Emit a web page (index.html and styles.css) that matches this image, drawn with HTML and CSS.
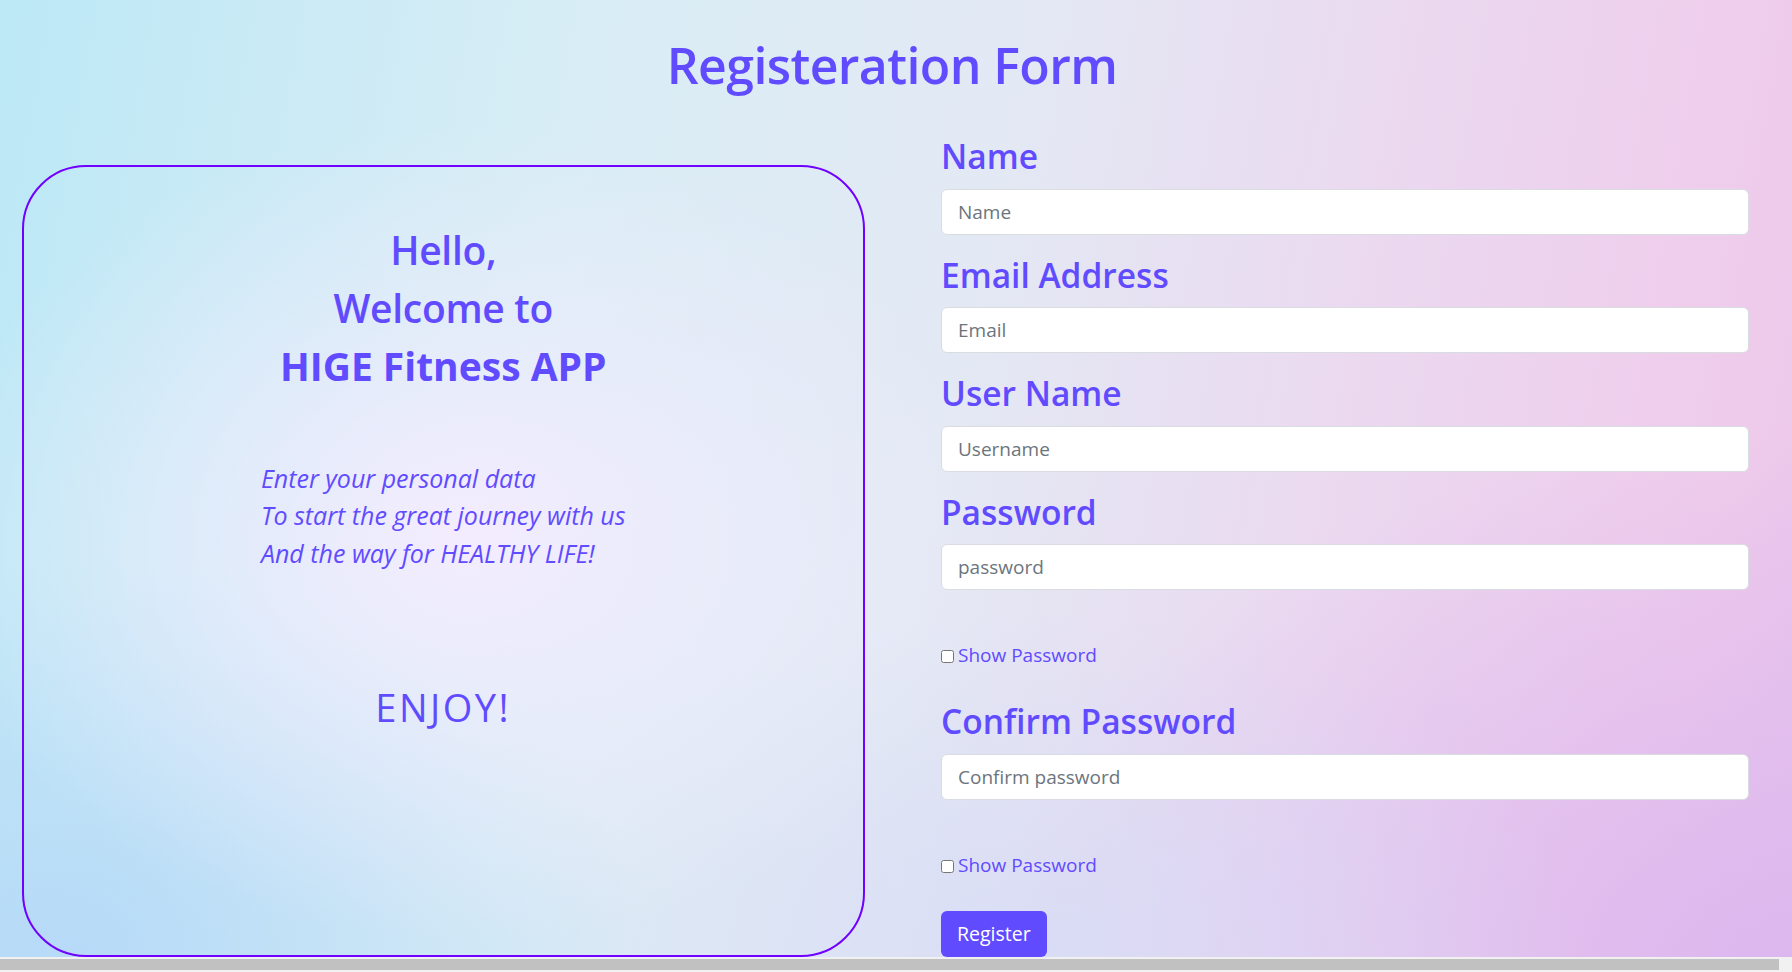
FILE: index.html
```html
<!DOCTYPE html>
<html lang="en">
<head>
<meta charset="utf-8">
<title>Registeration Form</title>
<link rel="stylesheet" href="styles.css">
</head>
<body>
  <h1 class="title">Registeration Form</h1>
  <div class="main">
    <section class="welcome-col">
      <div class="card">
        <div class="greet">Hello,</div>
        <div class="greet">Welcome to</div>
        <div class="greet greet-bold">HIGE Fitness APP</div>
        <p class="intro">Enter your personal data<br>To start the great journey with us<br>And the way for HEALTHY LIFE!</p>
        <div class="enjoy">ENJOY!</div>
      </div>
    </section>
    <form class="form">
      <div class="group">
        <label class="label" for="name">Name</label>
        <input class="input" id="name" type="text" placeholder="Name">
      </div>
      <div class="group">
        <label class="label" for="email">Email Address</label>
        <input class="input" id="email" type="email" placeholder="Email">
      </div>
      <div class="group">
        <label class="label" for="user">User Name</label>
        <input class="input" id="user" type="text" placeholder="Username">
      </div>
      <div class="group">
        <label class="label" for="pw">Password</label>
        <input class="input" id="pw" type="password" placeholder="password">
      </div>
      <label class="check"><input type="checkbox" class="check-box"><span>Show Password</span></label>
      <div class="group">
        <label class="label" for="cpw">Confirm Password</label>
        <input class="input" id="cpw" type="password" placeholder="Confirm password">
      </div>
      <label class="check"><input type="checkbox" class="check-box"><span>Show Password</span></label>
      <button class="btn" type="button">Register</button>
    </form>
  </div>
  <div class="hscroll"><div class="hscroll-thumb"></div></div>
</body>
</html>
```
FILE: styles.css
```css
html {
  overflow: hidden;
  min-height: 100%;
  background:
    radial-gradient(ellipse 30% 42% at 26% 55%, rgba(245, 236, 255, 0.95), rgba(245, 236, 255, 0) 100%),
    radial-gradient(ellipse 32% 40% at 4% 98%, rgba(178, 214, 248, 0.8), rgba(178, 214, 248, 0) 100%),
    radial-gradient(ellipse 30% 35% at 58% 98%, rgba(214, 220, 246, 0.8), rgba(214, 220, 246, 0) 100%),
    radial-gradient(ellipse 45% 55% at 100% 100%, rgba(218, 182, 239, 0.95), rgba(218, 182, 239, 0) 100%),
    linear-gradient(100deg, #bce8f6 0%, #d8edf5 30%, #e3e9f4 52%, #ebd9f0 72%, #efcbeb 92%, #eac5ec 100%);
  background-attachment: fixed;
}

body {
  margin: 0;
  font-family: "Open Sans", "Lato", sans-serif;
  color: #614bff;
}

.title {
  margin: 35px 0 0;
  padding-right: 8px;
  font-size: 50px;
  line-height: 60px;
  font-weight: 600;
  letter-spacing: -0.6px;
  text-align: center;
  color: #614bff;
}

.main {
  display: grid;
  grid-template-columns: 1fr 1fr;
  margin-top: 41px;
}

.welcome-col {
  padding: 29px 31px 0 21.5px;
}

.card {
  height: 792px;
  box-sizing: border-box;
  border: 2px solid #7000ff;
  border-radius: 64px;
  padding-top: 53.5px;
  text-align: center;
}

.greet {
  font-size: 39px;
  line-height: 58px;
  font-weight: 600;
  letter-spacing: -0.3px;
}

.greet-bold {
  font-weight: 700;
  letter-spacing: 0;
}

.intro {
  display: inline-block;
  margin: 65.7px 0 0;
  text-align: left;
  font-style: italic;
  font-size: 25px;
  line-height: 37.2px;
}

.enjoy {
  margin-top: 113.6px;
  font-size: 38px;
  line-height: 44px;
  font-weight: 400;
  letter-spacing: 2.5px;
}

.form {
  padding: 0 43px 0 45px;
  display: flex;
  flex-direction: column;
}

.group {
  display: flex;
  flex-direction: column;
  margin-bottom: 20px;
}

.label {
  font-size: 33.5px;
  line-height: 40px;
  font-weight: 600;
  margin-bottom: 12.5px;
}

.input {
  height: 46px;
  box-sizing: border-box;
  border: 1px solid #d9dde2;
  border-radius: 6px;
  background: #fff;
  padding: 0 16px;
  font-family: "Open Sans", "Lato", sans-serif;
  font-size: 19px;
  color: #212529;
}

.input::placeholder {
  color: #6c757d;
}

.check {
  display: flex;
  align-items: center;
  margin-top: 30px;
  margin-bottom: 31px;
  height: 30px;
  font-size: 19px;
  line-height: 30px;
}

.check-box {
  width: 13px;
  height: 13px;
  margin: 3px 4px 0 0;
}

.btn {
  align-self: flex-start;
  height: 46px;
  padding: 0 16px;
  border: none;
  border-radius: 6px;
  background: #614bff;
  color: #fff;
  font-family: "Open Sans", "Lato", sans-serif;
  font-size: 19.5px;
}

.hscroll {
  position: fixed;
  left: 0;
  right: 0;
  bottom: 0;
  height: 15px;
  background: #f1f1f1;
}

.hscroll-thumb {
  margin-top: 2px;
  width: 1779px;
  height: 11px;
  background: #c1c1c1;
}
```
